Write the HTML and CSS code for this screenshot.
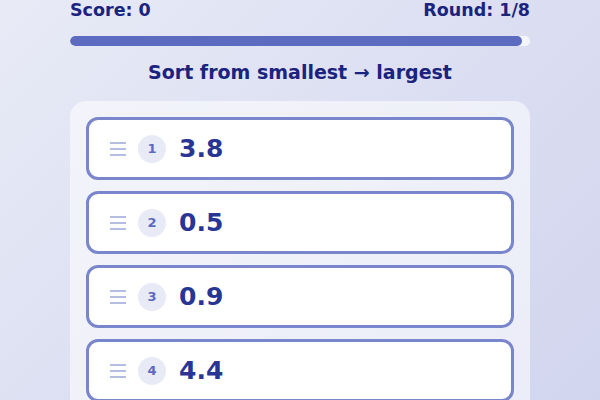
FILE: index.html
```html
<!DOCTYPE html>
<html>
<head>
<meta charset="utf-8">
<link rel="stylesheet" href="styles.css">
</head>
<body>
<div class="app">
  <div class="header">
    <span class="score">Score: 0</span>
    <span class="round">Round: 1/8</span>
  </div>
  <div class="progress"><div class="fill" style="width:98.2%"></div></div>
  <div class="title">Sort from smallest → largest</div>
  <div class="panel">
    <div class="item">
      <svg class="grip" width="16" height="14" viewBox="0 0 16 14"><path d="M0 1h16M0 7h16M0 13h16" stroke="#9fa8da" stroke-width="1.6"/></svg>
      <span class="badge">1</span>
      <span class="value">3.8</span>
    </div>
    <div class="item">
      <svg class="grip" width="16" height="14" viewBox="0 0 16 14"><path d="M0 1h16M0 7h16M0 13h16" stroke="#9fa8da" stroke-width="1.6"/></svg>
      <span class="badge">2</span>
      <span class="value">0.5</span>
    </div>
    <div class="item">
      <svg class="grip" width="16" height="14" viewBox="0 0 16 14"><path d="M0 1h16M0 7h16M0 13h16" stroke="#9fa8da" stroke-width="1.6"/></svg>
      <span class="badge">3</span>
      <span class="value">0.9</span>
    </div>
    <div class="item">
      <svg class="grip" width="16" height="14" viewBox="0 0 16 14"><path d="M0 1h16M0 7h16M0 13h16" stroke="#9fa8da" stroke-width="1.6"/></svg>
      <span class="badge">4</span>
      <span class="value">4.4</span>
    </div>
  </div>
</div>
</body>
</html>
```
FILE: styles.css
```css
html, body {
  margin: 0;
  padding: 0;
  height: 100%;
}
body {
  font-family: "DejaVu Sans", Verdana, sans-serif;
  background: linear-gradient(135deg, #e8eaf6 0%, #d1d5ee 100%);
  overflow: hidden;
  color: #1a237e;
}
.app {
  width: 460px;
  margin: 0 auto;
}
.header {
  display: flex;
  justify-content: space-between;
  font-weight: bold;
  font-size: 17.5px;
  line-height: 20px;
}
.progress {
  margin-top: 16px;
  height: 10px;
  border-radius: 5px;
  background: rgba(255, 255, 255, 0.7);
  overflow: hidden;
}
.fill {
  height: 100%;
  background: #5c6bc0;
  border-radius: 5px;
}
.title {
  margin-top: 15px;
  text-align: center;
  font-weight: bold;
  font-size: 19px;
  line-height: 22px;
}
.panel {
  margin-top: 18px;
  background: rgba(255, 255, 255, 0.55);
  border-radius: 16px;
  padding: 16px;
  display: flex;
  flex-direction: column;
  gap: 11px;
}
.item {
  height: 57px;
  background: #fff;
  border: 3px solid #7986cb;
  border-radius: 12px;
  display: flex;
  align-items: center;
  padding: 0 21px;
}
.grip {
  flex: none;
  display: block;
}
.badge {
  margin-left: 12px;
  width: 28px;
  height: 28px;
  border-radius: 50%;
  background: #e8eaf6;
  color: #5c6bc0;
  font-size: 13px;
  font-weight: bold;
  display: flex;
  align-items: center;
  justify-content: center;
}
.value {
  margin-left: 13px;
  font-size: 25px;
  font-weight: bold;
  color: #283593;
}
```
